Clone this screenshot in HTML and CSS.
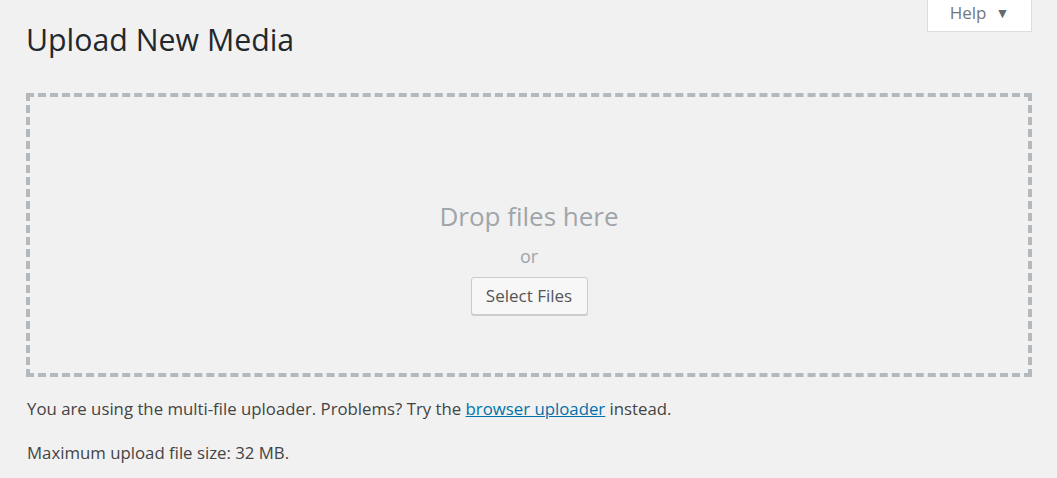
FILE: index.html
```html
<!DOCTYPE html>
<html>
<head>
<meta charset="utf-8">
<link rel="stylesheet" href="styles.css">
</head>
<body>
<div class="screen-meta">
  <button class="help-tab">Help <span class="arrow">▼</span></button>
</div>
<div class="wrap">
  <h1 class="title">Upload New Media</h1>
  <div class="drop-area">
    <p class="drop-text">Drop files here</p>
    <p class="or">or</p>
    <button class="select-btn">Select Files</button>
  </div>
  <p class="note">You are using the multi-file uploader. Problems? Try the <a href="#">browser uploader</a> instead.</p>
  <p class="note max">Maximum upload file size: 32 MB.</p>
</div>
</body>
</html>
```
FILE: styles.css
```css
html, body {
  margin: 0;
  padding: 0;
  background: #f1f1f1;
  font-family: "Open Sans", "Noto Sans", sans-serif;
  color: #444;
}
.screen-meta {
  display: flex;
  justify-content: flex-end;
  padding-right: 25px;
  height: 0;
}
.help-tab {
  height: 32px;
  width: 105px;
  background: #fff;
  border: 1px solid #ddd;
  border-top: none;
  font-family: inherit;
  font-size: 17px;
  color: #72777c;
  padding: 0 0 7px 0;
  display: flex;
  align-items: center;
  justify-content: center;
  gap: 9px;
}
.help-tab .arrow {
  font-size: 14px;
  color: #646970;
}
.wrap {
  padding: 17px 25px 0 26px;
}
.title {
  margin: 0;
  font-size: 30.3px;
  font-weight: 400;
  color: #23282d;
  line-height: 46px;
}
.drop-area {
  margin-top: 30px;
  height: 276px;
  border: 4px dashed #b4b9be;
  display: flex;
  flex-direction: column;
  align-items: center;
  justify-content: flex-start;
}
.drop-text {
  margin: 102px 0 0 0;
  font-size: 26px;
  line-height: 34px;
  color: #a0a5aa;
}
.or {
  margin: 12px 0 0 0;
  font-size: 18px;
  line-height: 22px;
  color: #a0a5aa;
}
.select-btn {
  margin-top: 10px;
  width: 117px;
  height: 38px;
  background: #f7f7f7;
  border: 1px solid #ccc;
  border-radius: 3px;
  box-shadow: 0 1px 0 #ccc;
  font-family: inherit;
  font-size: 17px;
  color: #555;
  padding: 0 0 1px 0;
}
.note {
  margin: 20px 0 0 1px;
  font-size: 16.8px;
  line-height: 24px;
}
.note a {
  color: #0073aa;
  text-decoration: underline;
}
.max {
  margin-top: 20px;
}
```
